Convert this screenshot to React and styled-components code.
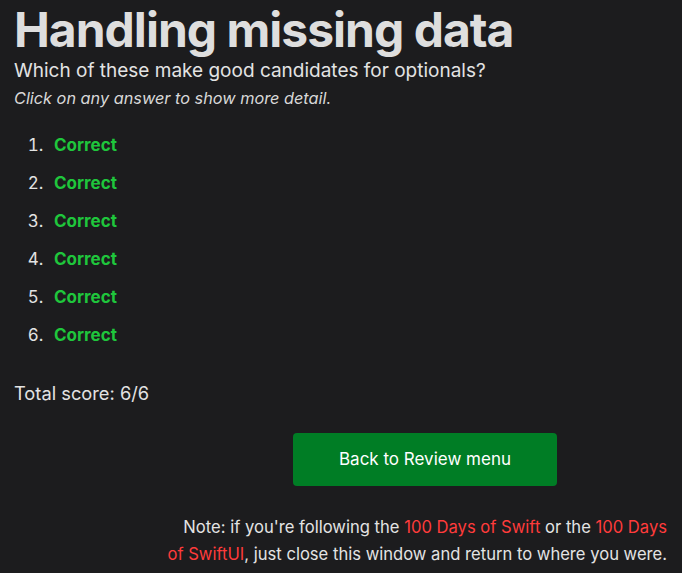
import React from "react";
import styled, { createGlobalStyle } from "styled-components";

const GlobalStyle = createGlobalStyle`
  html, body {
    margin: 0;
    padding: 0;
    background: #1c1c1e;
  }
  body {
    font-family: Inter, "Noto Sans", sans-serif;
    color: #e3e3e3;
  }
`;

const answers = [1, 2, 3, 4, 5, 6];

const App = () => (
  <>
    <GlobalStyle />
    <Page>
      <Title>Handling missing data</Title>
      <Question>Which of these make good candidates for optionals?</Question>
      <Hint>Click on any answer to show more detail.</Hint>
      <AnswerList>
        {answers.map(n => (
          <Answer key={n}>
            <Result>Correct</Result>
          </Answer>
        ))}
      </AnswerList>
      <Score>Total score: 6/6</Score>
      <Footer>
        <BackButton>Back to Review menu</BackButton>
        <Note>
          Note: if you're following the <Link href="#">100 Days of Swift</Link>{" "}
          or the <Link href="#">100 Days of SwiftUI</Link>, just close this
          window and return to where you were.
        </Note>
      </Footer>
    </Page>
  </>
);

const Page = styled.div`
  padding: 4px 15px 0 14px;
`;

const Title = styled.h1`
  margin: 0;
  font-size: 48px;
  font-weight: 700;
  line-height: 1.1;
  letter-spacing: -1px;
  color: #dedede;
`;

const Question = styled.p`
  margin: 2px 0 0;
  font-size: 19px;
  line-height: 24px;
`;

const Hint = styled.p`
  margin: 4px 0 0;
  font-size: 16.3px;
  font-style: italic;
  line-height: 22px;
  color: #d8d8d8;
`;

const AnswerList = styled.ol`
  margin: 25px 0 0;
  padding-left: 34px;
  font-size: 17px;
`;

const Answer = styled.li`
  line-height: 22px;
  margin-bottom: 16px;
  padding-left: 6px;
`;

const Result = styled.span`
  font-weight: 700;
  color: #1fc63c;
`;

const Score = styled.p`
  margin: 36px 0 0;
  font-size: 18.3px;
`;

const Footer = styled.div`
  width: 500px;
  margin-left: auto;
  display: flex;
  flex-direction: column;
  align-items: center;
  margin-top: 29px;
`;

const BackButton = styled.button`
  width: 264px;
  height: 53px;
  margin-left: 16px;
  border: none;
  border-radius: 4px;
  background: #007d25;
  color: #fff;
  font-family: inherit;
  font-size: 17px;
  cursor: pointer;
`;

const Note = styled.p`
  align-self: stretch;
  margin: 28px 0 0;
  text-align: right;
  font-size: 16.6px;
  line-height: 27px;
`;

const Link = styled.a`
  color: #ff3b3b;
  text-decoration: none;
`;

export default App;
